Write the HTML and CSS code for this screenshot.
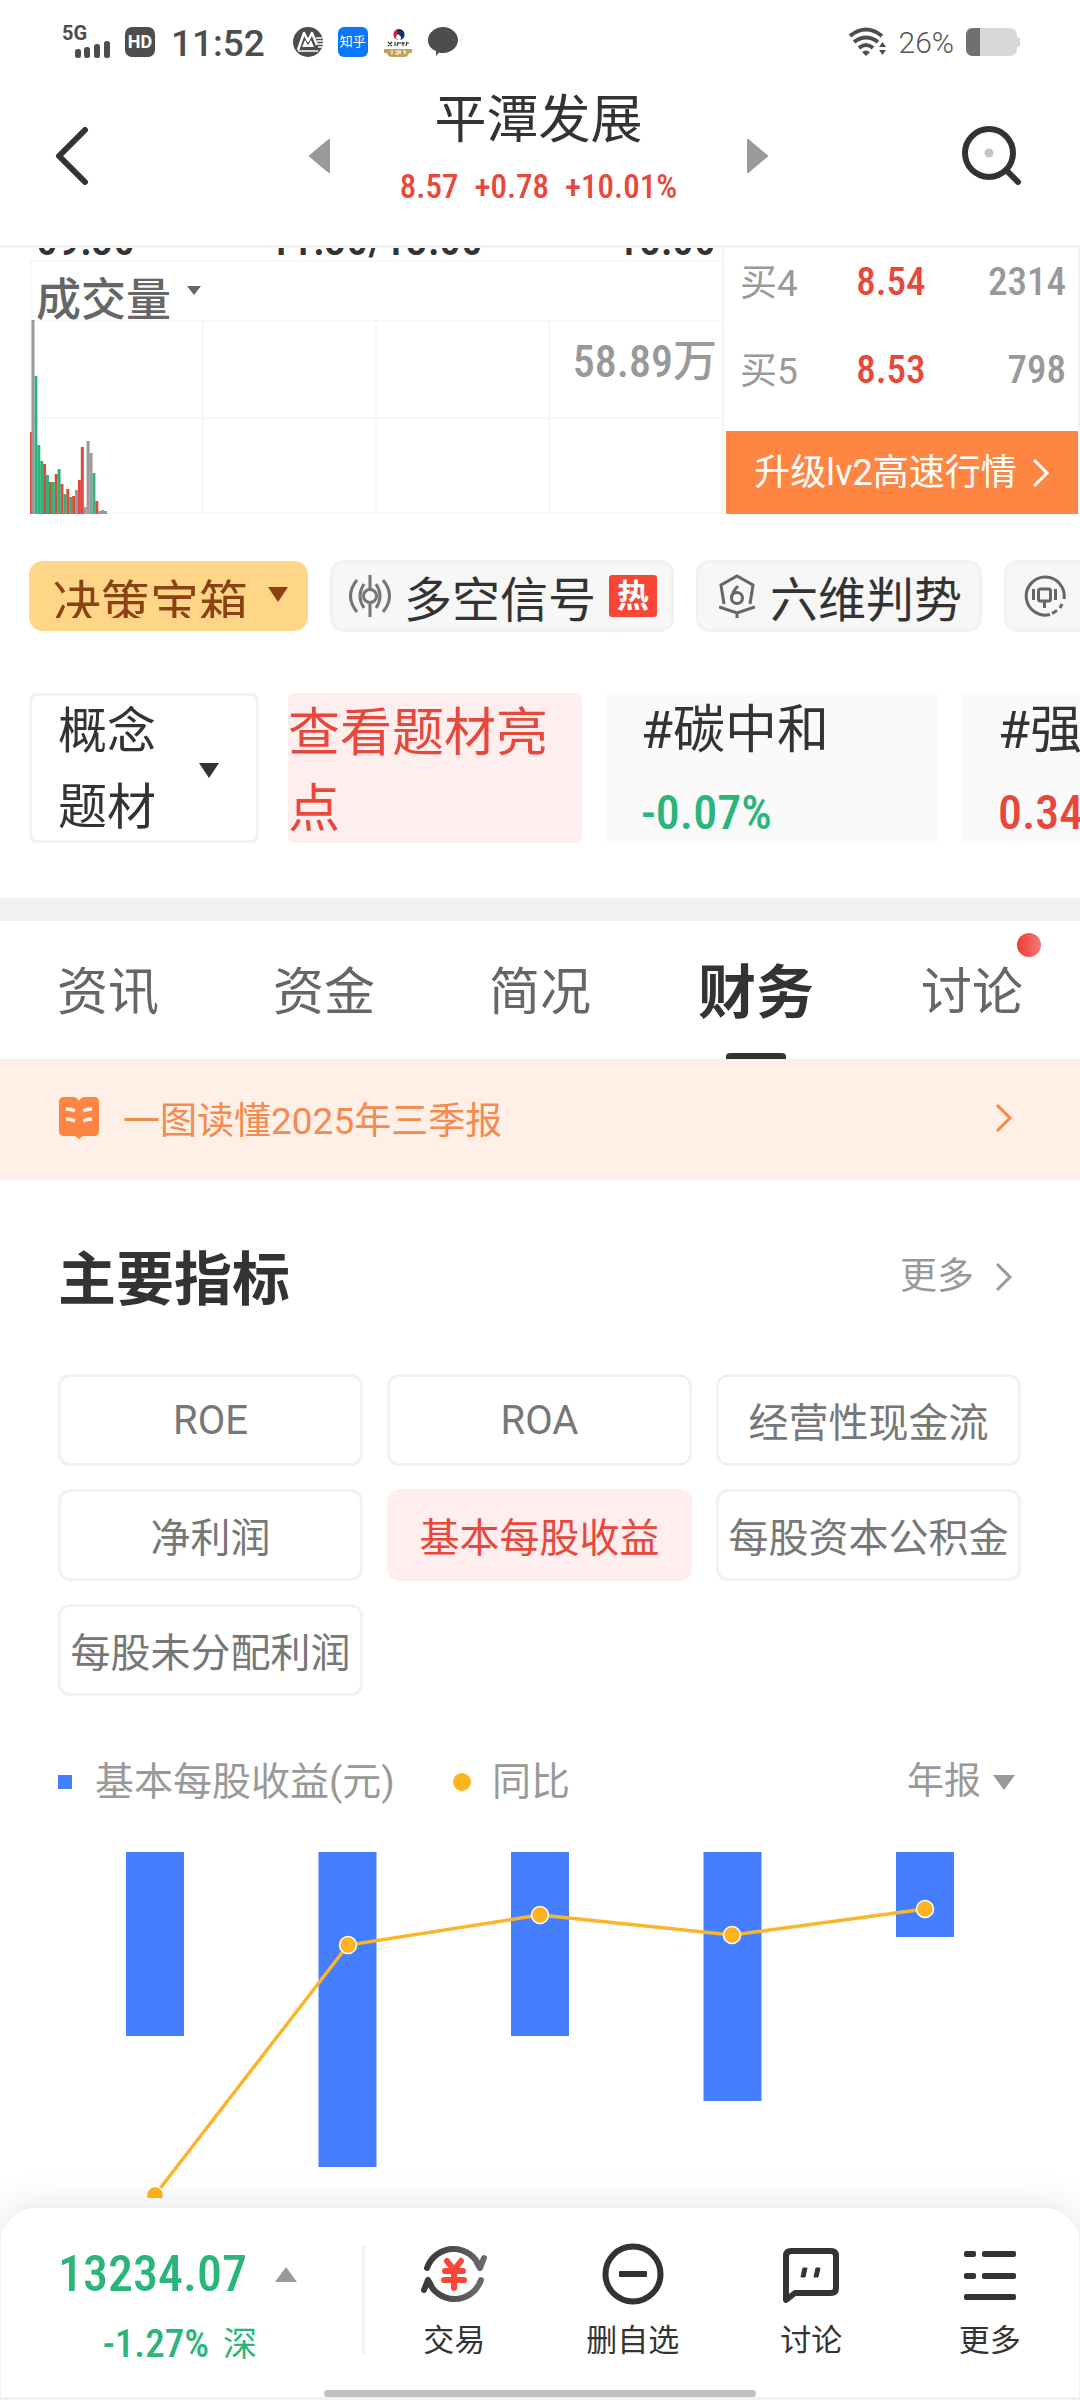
FILE: index.html
```html
<!DOCTYPE html>
<html lang="zh-CN">
<head>
<meta charset="utf-8">
<meta name="viewport" content="width=device-width, initial-scale=1">
<title>平潭发展</title>
<link rel="stylesheet" href="styles.css">
</head>
<body>
<div class="app">
  <header class="top">
    <div class="status">
      <div class="status-left">
        <div class="signal">
          <span class="signal-net">5G</span>
          <svg width="36" height="17" viewBox="0 0 36 17" fill="#4d4d4d"><rect x="0" y="8" width="6" height="9" rx="2.5"/><rect x="9" y="6" width="6" height="11" rx="2.5"/><rect x="19" y="3" width="6" height="14" rx="2.5"/><rect x="29" y="0" width="6" height="17" rx="2.5"/></svg>
        </div>
        <span class="hd">HD</span>
        <span class="clock">11:52</span>
        <div class="notices">
          <svg width="30" height="30" viewBox="0 0 30 30"><circle cx="15" cy="15" r="15" fill="#4d4d4d"/><path d="M5 23 11 6l4 8 4-8 5 12" fill="none" stroke="#fff" stroke-width="2.500" stroke-linejoin="round"/><path d="M9 20l3-7 3 5 3-5 3 7z" fill="#fff"/><path d="M5 24h20M23 11h6M24 14h6M25 17h5M25 20h4" stroke="#fff" stroke-width="1.500"/></svg>
          <span class="zhihu">知乎</span>
          <svg width="30" height="30" viewBox="0 0 30 30"><path d="M15 2a5.500 5.500 0 1 0 2 11c-4 0-5-3-3-5 2-1 3-3 1-6z" fill="#c8242c"/><path d="M15 2a5.500 5.500 0 0 1 2 11c2-2 1-4-1-5-2-2-2-4-1-6z" fill="#1d2f6f"/><path d="M5 15l4 4M9 15l-4 4M12 15v4M15 15l-1 4M15 16h3M20 15v4M18 16h4M24 15l-1 4M23 16h3" stroke="#333" stroke-width="1.200"/><path d="M1 22h28v4h-3q-1 4-5 4H9q-4 0-5-4H1z" fill="#c3a05c"/><path d="M9 23v4M12 24h3v3h-3M17 23v4M20 24h2v3" stroke="#fff" stroke-width="1.200" fill="none"/></svg>
          <svg width="30" height="30" viewBox="0 0 30 30"><path d="M15 0c8 0 15 6 15 13s-7 13-15 13q-3 0-4-.5L8 29v-5C3 22 0 18 0 13 0 6 7 0 15 0z" fill="#4d4d4d"/></svg>
        </div>
      </div>
      <div class="status-right">
        <svg width="39" height="30" viewBox="0 0 39 30"><g fill="none" stroke="#4d4d4d" stroke-width="4"><path d="M2 9q16-13 32 0"/><path d="M6 15q12-9 24 0"/><path d="M11 21q7-6 14 0"/></g><path d="M14 25q4-3 8 0l-4 4z" fill="#4d4d4d"/><path d="M31 20l3.500-5 3.500 5zM31 23l3.500 5 3.500-5z" fill="#4d4d4d"/></svg>
        <span class="percent">26%</span>
        <svg width="54" height="28" viewBox="0 0 54 28"><rect x="0" y="0" width="51" height="28" rx="7" fill="#d8d8d8"/><rect x="49" y="9" width="5" height="10" rx="2" fill="#d8d8d8"/><path d="M14 0H7Q0 0 0 7v14q0 7 7 7h7z" fill="#707070"/></svg>
      </div>
    </div>
    <nav class="nav">
      <button class="icon-btn" aria-label="返回"><svg width="34" height="60" viewBox="0 0 34 60"><path d="M30 4 4 30l26 26" fill="none" stroke="#333" stroke-width="6" stroke-linecap="round" stroke-linejoin="round"/></svg></button>
      <div class="switcher">
        <button class="icon-btn" aria-label="上一只"><svg width="21" height="34" viewBox="0 0 21 34"><path d="M20 1v32L1 17z" fill="#999" stroke="#999" stroke-width="2" stroke-linejoin="round"/></svg></button>
        <div class="stock">
          <h1 class="stock-name">平潭发展</h1>
          <div class="stock-price num"><span>8.57</span><span>+0.78</span><span>+10.01%</span></div>
        </div>
        <button class="icon-btn" aria-label="下一只"><svg width="21" height="34" viewBox="0 0 21 34"><path d="M1 1v32l19-16z" fill="#999" stroke="#999" stroke-width="2" stroke-linejoin="round"/></svg></button>
      </div>
      <button class="icon-btn search" aria-label="搜索"><svg width="60" height="60" viewBox="0 0 60 60"><circle cx="27" cy="27" r="24" fill="none" stroke="#333" stroke-width="6"/><circle cx="27" cy="27" r="4.500" fill="#c4c4c4"/><path d="M44 44l12 12" stroke="#333" stroke-width="6" stroke-linecap="round"/></svg></button>
    </nav>
  </header>

  <main class="content">
    <section class="quote">
      <div class="volume">
        <div class="times num"><span>09:30</span><span>11:30/13:00</span><span>15:00</span></div>
        <div class="volume-plot">
          <svg class="plot" viewBox="0 0 692 254">
            <path d="M0 1H692M0 61H692M0 158H692M0 253H692M1 0V254M173 61V254M346 61V254M519 61V254" stroke="#f8f8f8" stroke-width="2" fill="none"/>
            <g fill="#e2493d"><rect x="-1" y="172" width="3" height="82"/><rect x="13.100" y="204" width="3" height="50"/><rect x="18.900" y="222" width="3" height="32"/><rect x="24.700" y="214" width="3" height="40"/><rect x="30.500" y="224" width="3" height="30"/><rect x="36.300" y="229" width="3" height="25"/><rect x="42.100" y="236" width="3" height="18"/><rect x="47.900" y="220" width="3" height="34"/><rect x="50.800" y="187" width="3" height="67"/><rect x="65.300" y="241" width="3" height="13"/></g>
            <g fill="#2ab57b"><rect x="4.400" y="116" width="3" height="138"/><rect x="7.300" y="185" width="3" height="69"/><rect x="10.200" y="201" width="3" height="53"/><rect x="16" y="215" width="3" height="39"/><rect x="21.800" y="222" width="3" height="32"/><rect x="27.600" y="209" width="3" height="45"/><rect x="33.400" y="234" width="3" height="20"/><rect x="39.200" y="237" width="3" height="17"/><rect x="62.400" y="213" width="3" height="41"/></g>
            <g fill="#999"><rect x="1.500" y="60" width="3" height="194"/><rect x="45" y="230" width="3" height="24"/><rect x="53.700" y="247" width="3" height="7"/><rect x="56.600" y="181" width="3" height="73"/><rect x="59.500" y="193" width="3" height="61"/><rect x="68.200" y="251" width="3" height="3"/><rect x="71.100" y="250" width="3" height="4"/><rect x="74" y="251" width="3" height="3"/></g>
          </svg>
          <div class="volume-kind">
            <select aria-label="副图指标"><option>成交量</option></select>
            <svg width="14" height="9" viewBox="0 0 14 9"><path d="M0 0h14L7 9z" fill="#666"/></svg>
          </div>
          <div class="volume-max num">58.89万</div>
        </div>
      </div>
      <div class="book">
        <table class="orders">
          <tr><th scope="row">买4</th><td class="bid num">8.54</td><td class="lots num">2314</td></tr>
          <tr><th scope="row">买5</th><td class="bid num">8.53</td><td class="lots num">798</td></tr>
        </table>
        <button class="upgrade">升级lv2高速行情<svg width="18" height="30" viewBox="0 0 18 30"><path d="M2 2l13 13L2 28" fill="none" stroke="#fff" stroke-width="3"/></svg></button>
      </div>
    </section>

    <div class="chips">
      <button class="chip chip-box"><span class="chip-cut">决策宝箱</span><svg width="22" height="15" viewBox="0 0 22 15"><path d="M1 0h20L11 15z" fill="#8c4114"/></svg></button>
      <button class="chip"><svg width="42" height="42" viewBox="0 0 42 42" fill="none" stroke="#757575" stroke-width="3"><circle cx="21" cy="21" r="6.500"/><path d="M21 0v14M21 28v14M15 9q-8 12 0 24M8 5q-13 16 0 32M27 9q8 12 0 24M34 5q13 16 0 32"/></svg><span class="chip-text">多空信号</span><em class="hot">热</em></button>
      <button class="chip chip-six"><svg width="36" height="44" viewBox="0 0 36 44" fill="none" stroke="#666" stroke-width="3"><path d="M5 30 2 11 18 2l16 9-3 19M0 33l18 6 18-6M18 38v6"/><circle cx="18" cy="24" r="5.500"/><path d="M19 12q-6 6-6.500 12"/></svg><span class="chip-text">六维判势</span></button>
      <button class="chip chip-last"><svg width="42" height="42" viewBox="0 0 42 42" fill="none" stroke="#666" stroke-width="3"><path d="M40 24A19 19 0 1 0 26 39.500"/><path d="M28 38.500l5-3M36 33l2-4"/><rect x="14.500" y="14" width="12" height="12" rx="2"/><path d="M20.500 26v7M9.500 14v11M31.500 14v11"/></svg></button>
    </div>

    <div class="topics">
      <button class="topic-menu"><span>概念<br>题材</span><svg width="22" height="15" viewBox="0 0 22 15"><path d="M1 0h20L11 15z" fill="#333"/></svg></button>
      <a class="topic-hot" href="#">查看题材亮点</a>
      <a class="topic" href="#"><span>#碳中和</span><b class="num down">-0.07%</b></a>
      <a class="topic" href="#"><span>#强</span><b class="num up">0.34</b></a>
    </div>

    <nav class="tabs">
      <a href="#">资讯</a><a href="#">资金</a><a href="#">简况</a><a href="#" class="active" aria-current="page">财务</a><a href="#" class="unread">讨论</a>
    </nav>

    <a class="banner" href="#">
      <svg width="40" height="42" viewBox="0 0 40 42"><path d="M5 0h9q4 0 6 4 2-4 6-4h9q5 0 5 5v29q0 5-5 5H24l-4 3-4-3H5q-5 0-5-5V5q0-5 5-5z" fill="#ff8642"/><path d="M7 12q5 0 9 2M7 22q5 0 9 2M33 12q-5 0-9 2M33 22q-5 0-9 2" stroke="#fff0e7" stroke-width="3.500" fill="none"/></svg>
      <span>一图读懂2025年三季报</span>
      <svg class="chevron" width="18" height="30" viewBox="0 0 18 30"><path d="M2 2l13 13L2 28" fill="none" stroke="#ff8642" stroke-width="3"/></svg>
    </a>

    <section class="metrics">
      <div class="metrics-head">
        <h2>主要指标</h2>
        <a class="more" href="#">更多<svg width="18" height="30" viewBox="0 0 18 30"><path d="M2 2l13 13L2 28" fill="none" stroke="#999" stroke-width="3"/></svg></a>
      </div>
      <div class="pills">
        <button>ROE</button><button>ROA</button><button>经营性现金流</button>
        <button>净利润</button><button class="on">基本每股收益</button><button>每股资本公积金</button>
        <button>每股未分配利润</button>
      </div>
      <div class="legend">
        <span class="key-bar">基本每股收益(元)</span>
        <span class="key-line">同比</span>
        <div class="period">
          <select aria-label="报告期"><option>年报</option></select>
          <svg width="22" height="15" viewBox="0 0 22 15"><path d="M0 0h22L11 15z" fill="#999"/></svg>
        </div>
      </div>
    </section>
    <svg class="eps" viewBox="0 0 1080 346">
      <g fill="#457eff"><rect x="126" y="0" width="58" height="184"/><rect x="318.500" y="0" width="58" height="315"/><rect x="511" y="0" width="58" height="184"/><rect x="703.500" y="0" width="58" height="249"/><rect x="896" y="0" width="58" height="85"/></g>
      <path d="M155 343 348 93 540 63 732 83 925 57" fill="none" stroke="#fab52a" stroke-width="3.500"/>
      <g fill="#ffb320" stroke="#fff" stroke-width="1.500"><circle cx="155" cy="343" r="8.500"/><circle cx="348" cy="93" r="8.500"/><circle cx="540" cy="63" r="8.500"/><circle cx="732" cy="83" r="8.500"/><circle cx="925" cy="57" r="8.500"/></g>
    </svg>
  </main>

  <footer class="dock">
    <button class="index">
      <span class="index-row"><b class="num">13234.07</b><svg width="22" height="15" viewBox="0 0 22 15"><path d="M0 15h22L11 0z" fill="#999"/></svg></span>
      <span class="index-sub"><b class="num">-1.27%</b>深</span>
    </button>
    <button class="action">
      <svg width="66" height="62" viewBox="0 0 66 62"><defs><linearGradient id="g" x1="0" x2="1"><stop offset="0" stop-color="#383838"/><stop offset="1" stop-color="#6a6a6a"/></linearGradient></defs><g fill="none" stroke="url(#g)" stroke-width="6" stroke-linecap="round" stroke-linejoin="round"><path d="M6 25A28 28 0 0 1 59 25L63 15M59 25l-3-5"/><path d="M60 37A28 28 0 0 1 7 37L3 47M7 37l3 5"/></g><path d="M26 18l7 9 7-9M24 28h18M23 37h20M33 27v18" stroke="#f84637" stroke-width="6" stroke-linecap="round" fill="none"/></svg>
      <span>交易</span>
    </button>
    <button class="action">
      <svg width="62" height="62" viewBox="0 0 62 62"><circle cx="31" cy="31" r="27.500" fill="none" stroke="#333" stroke-width="6"/><rect x="17" y="28" width="28" height="6" rx="1" fill="#333"/></svg>
      <span>删自选</span>
    </button>
    <button class="action">
      <svg width="62" height="62" viewBox="0 0 62 62"><path d="M6 57V13q0-5 5-5h40q5 0 5 5v32q0 5-5 5H15z" fill="none" stroke="#333" stroke-width="6" stroke-linejoin="round"/><path d="M27 25l-2 9h-4l2-9zM40 25l-2 9h-4l2-9z" fill="#333" stroke="#333" stroke-linejoin="round"/></svg>
      <span>讨论</span>
    </button>
    <button class="action">
      <svg width="62" height="62" viewBox="0 0 62 62" fill="#333"><rect x="5" y="8" width="12" height="6" rx="2"/><rect x="23" y="8" width="34" height="6" rx="2"/><rect x="5" y="30" width="12" height="6" rx="2"/><rect x="23" y="30" width="34" height="6" rx="2"/><rect x="5" y="51" width="52" height="6" rx="2"/></svg>
      <span>更多</span>
    </button>
    <i class="home-bar"></i>
  </footer>
</div>
</body>
</html>
```
FILE: styles.css
```css
* { box-sizing: border-box; }

body {
  margin: 0;
  background: #fff;
  color: #333;
  font-family: Roboto, "Noto Sans CJK SC", sans-serif;
}

button, select {
  margin: 0;
  padding: 0;
  border: 0;
  background: none;
  color: inherit;
  font: inherit;
  appearance: none;
}

a { color: inherit; text-decoration: none; }
h1, h2 { margin: 0; }
svg { display: block; flex: none; }

.num { font-family: "Roboto Condensed", Roboto, "Noto Sans CJK SC", sans-serif; font-weight: 500; }

.app {
  display: flex;
  flex-direction: column;
  height: 100vh;
  overflow: hidden;
}

/* status bar and title */
.top { flex: none; border-bottom: 3px solid #f2f2f2; }

.status {
  display: flex;
  justify-content: space-between;
  height: 83px;
  padding: 0 60px 0 62px;
}
.status-left, .status-right, .notices { display: flex; align-items: center; }
.signal { padding-right: 14px; }
.signal-net { display: block; font-size: 20px; line-height: 16px; font-weight: 700; color: #4d4d4d; }
.signal svg { margin-left: 13px; }
.hd {
  width: 30px;
  margin-right: 16px;
  border-radius: 7px;
  background: #4d4d4d;
  color: #fff;
  font-size: 18px;
  font-weight: 700;
  line-height: 30px;
  text-align: center;
}
.clock { padding-top: 3px; font-size: 37px; font-weight: 500; color: #4d4d4d; }
.notices { gap: 15px; margin-left: 28px; }
.zhihu {
  width: 30px;
  border-radius: 6px;
  background: #0b76fb;
  color: #fff;
  font-size: 13px;
  line-height: 30px;
  text-align: center;
}
.percent { margin: 0 12px; padding-top: 2px; font-size: 30px; font-weight: 300; color: #555; }

.nav {
  display: grid;
  grid-template-columns: 1fr auto 1fr;
  align-items: center;
  padding: 0 58px 16px 55px;
}
.search { justify-self: end; }
.switcher { display: flex; align-items: center; justify-content: space-between; width: 460px; }
.stock { padding-bottom: 18px; text-align: center; }
.stock-name { font-size: 52px; font-weight: 400; line-height: 76px; margin-bottom: 4px; }
.stock-price { display: flex; justify-content: center; gap: 16px; font-size: 33px; line-height: 48px; color: #e8483c; }

.content { flex: 1; min-height: 0; overflow: hidden; }

/* volume and order book */
.quote { display: flex; padding-left: 30px; }
.volume { flex: 1; min-width: 0; border-right: 2px solid #f4f4f4; }
.times {
  display: flex;
  justify-content: space-between;
  align-items: flex-end;
  height: 12px;
  padding: 0 6px 4px;
  overflow: hidden;
  font-size: 44px;
  line-height: 32px;
}
.volume-plot { position: relative; }
.plot { width: 100%; height: auto; }
.volume-kind { position: absolute; left: 6px; top: 11px; display: flex; gap: 15px; color: #666; }
.volume-kind select { font-size: 45px; font-weight: 500; line-height: 60px; }
.volume-kind svg { margin-top: 15px; }
.volume-max { position: absolute; right: 5px; top: 72px; font-size: 44px; line-height: 60px; color: #999; }

.book { display: flex; flex-direction: column; justify-content: space-between; width: 356px; border-right: 2px solid #f4f4f4; }
.orders { width: 100%; margin-top: -10px; border-collapse: collapse; color: #999; font-size: 39px; }
.orders th, .orders td { height: 88px; padding: 0; }
.orders th { padding: 0 0 5px 16px; font-size: 37px; font-weight: 400; text-align: left; }
.orders .bid { padding-left: 4px; color: #e8483c; text-align: center; }
.orders .lots { padding-right: 12px; text-align: right; }
.upgrade {
  display: flex;
  align-items: center;
  justify-content: center;
  gap: 15px;
  height: 83px;
  margin-left: 2px;
  background: #ff8642;
  color: #fff;
  font-size: 36px;
  line-height: 44px;
}

/* tool chips */
.chips { display: flex; align-items: center; gap: 22px; margin-top: 46px; padding-left: 29px; overflow: hidden; }
.chip {
  display: flex;
  flex: none;
  align-items: center;
  height: 72px;
  padding: 0 14px 0 16px;
  gap: 13px;
  border: 3px solid #f2f2f2;
  border-radius: 14px;
  background: #f7f7f7;
  font-size: 48px;
  line-height: 62px;
}
.chip-text { padding-top: 9px; }
.chip-six { padding: 0 17px 0 20px; gap: 15px; }
.chip-last { width: 270px; padding-left: 17px; }
.chip-box { height: 70px; padding: 0 19px 0 23px; gap: 19px; border: 0; background: #ffd588; color: #8c4114; }
.chip-box svg { margin-bottom: 4px; }
.chip-cut { height: 44px; overflow: hidden; font-size: 49px; }
.hot { width: 48px; border-radius: 3px; background: #f84637; color: #fff; font-size: 32px; font-style: normal; font-weight: 700; line-height: 42px; text-align: center; }

/* concept cards */
.topics { display: flex; gap: 23px; margin-top: 61px; padding-left: 29px; overflow: hidden; font-size: 52px; line-height: 76px; }
.topic-menu {
  display: flex;
  flex: none;
  align-items: center;
  gap: 42px;
  width: 230px;
  height: 150px;
  margin-right: 6px;
  padding: 4px 0 0 26px;
  border: 3px solid #f2f2f2;
  border-radius: 8px;
  font-size: 49px;
  text-align: left;
}
.topic-hot { flex: none; width: 294px; height: 150px; padding-top: 3px; border-radius: 6px; background: #feefee; color: #e8483c; }
.topic { display: flex; flex: none; flex-direction: column; gap: 8px; width: 334px; height: 150px; padding-left: 36px; border-radius: 6px; background: #fafafa; }
.topic span { height: 74px; }
.topic .num { font-size: 48px; }
.up { color: #e8483c; }
.down { color: #2ab57b; }

/* section tabs */
.tabs { display: flex; margin-top: 55px; border-top: 23px solid #f2f2f2; }
.tabs a { position: relative; flex: 1; height: 138px; font-size: 51px; line-height: 144px; text-align: center; color: #666; }
.tabs .active { font-size: 58px; font-weight: 700; color: #333; }
.tabs .active::after {
  content: "";
  position: absolute;
  left: 50%;
  bottom: 0;
  width: 60px;
  height: 6px;
  margin-left: -30px;
  border-radius: 4px 4px 0 0;
  background: #333;
}
.tabs .unread::after {
  content: "";
  position: absolute;
  right: 39px;
  top: 12px;
  width: 24px;
  height: 24px;
  border-radius: 50%;
  background: linear-gradient(90deg, #f03d33, #f57a73);
}

.banner { display: flex; align-items: center; gap: 24px; height: 121px; padding: 0 67px 3px 59px; background: #fff0e7; color: #f48a4f; font-size: 37px; }
.chevron { margin-left: auto; }

/* key metrics */
.metrics { padding: 57px 59px 0 58px; }
.metrics-head { display: flex; align-items: flex-start; justify-content: space-between; padding-right: 8px; }
.metrics-head h2 { font-size: 58px; line-height: 86px; }
.more { display: flex; align-items: center; gap: 21px; font-size: 37px; line-height: 80px; color: #999; }
.pills { display: grid; grid-template-columns: repeat(3, 1fr); gap: 23px 24px; margin-top: 51px; }
.pills button { height: 92px; border: 3px solid #f2f2f2; border-radius: 12px; font-size: 40px; color: #777; white-space: nowrap; }
.pills .on { border-color: #feefee; background: #feefee; color: #e8483c; }
.legend { display: flex; align-items: center; margin-top: 58px; font-size: 39px; line-height: 56px; color: #999; }
.legend span { display: flex; align-items: center; }
.key-bar { margin-right: 58px; }
.key-bar::before { content: ""; width: 14px; height: 14px; margin-right: 23px; background: #457eff; }
.key-line::before { content: ""; width: 18px; height: 18px; margin-right: 21px; border-radius: 50%; background: #ffb320; }
.period { display: flex; align-items: center; gap: 12px; margin-left: auto; padding-right: 6px; font-size: 37px; }
.eps { width: 100%; height: auto; margin-top: 42px; overflow: hidden; }

/* bottom dock */
.dock {
  position: relative;
  display: flex;
  flex: none;
  height: 195px;
  border: solid #f2f2f2;
  border-width: 3px 1px;
  border-radius: 36px 36px 0 0;
  background: #fff;
  box-shadow: 0 0 40px rgba(0, 0, 0, 0.1);
}
.index { display: flex; flex-direction: column; width: 364px; margin: 38px 0 42px; padding-right: 65px; border-right: 3px solid #f2f2f2; color: #2ab57b; }
.index-row { display: flex; align-items: center; justify-content: flex-end; gap: 28px; font-size: 50px; line-height: 56px; }
.index-sub { display: flex; justify-content: flex-end; gap: 14px; padding-right: 40px; margin-top: 20px; font-size: 34px; line-height: 44px; }
.index-sub .num { font-size: 39px; }
.action { display: flex; flex: 1; flex-direction: column; align-items: center; gap: 12px; padding-top: 35px; font-size: 31px; line-height: 48px; color: #333; }
.home-bar { position: absolute; left: 30%; right: 30%; bottom: 0; height: 7px; border-radius: 4px; background: #c1c1c1; }
```
